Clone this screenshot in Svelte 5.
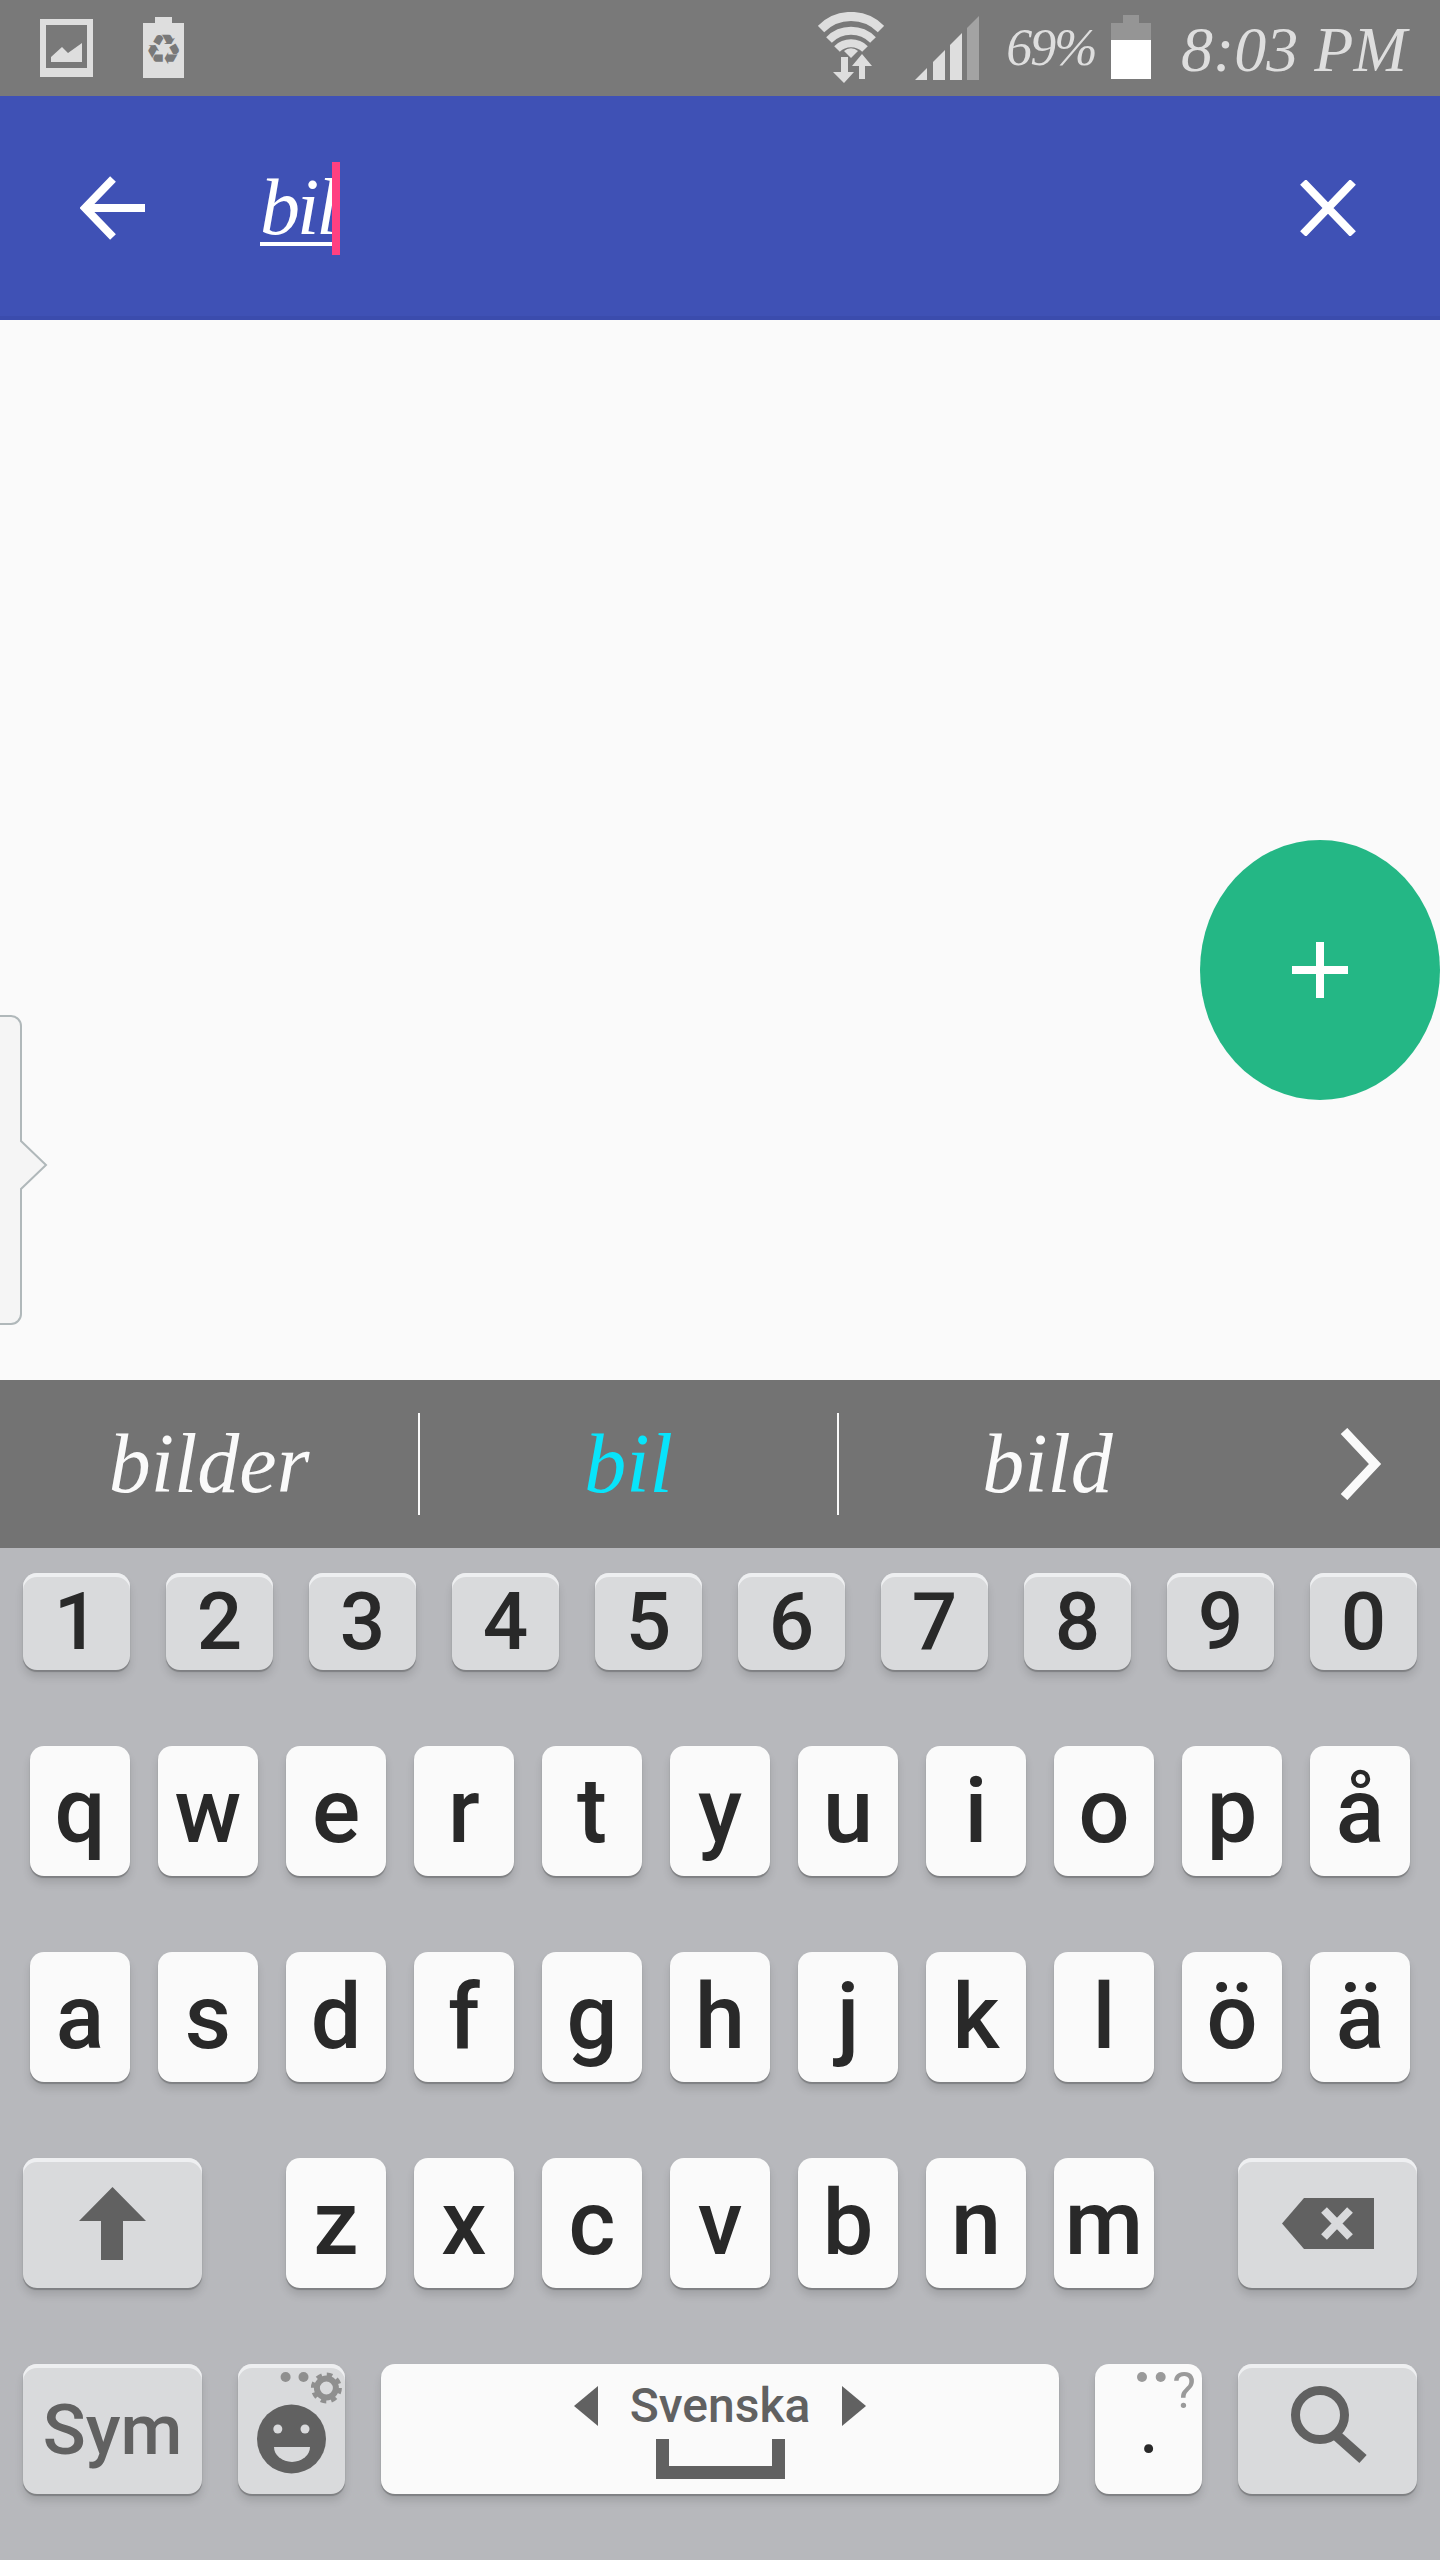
<script>
  const digits = ["1", "2", "3", "4", "5", "6", "7", "8", "9", "0"];
  const row1 = ["q", "w", "e", "r", "t", "y", "u", "i", "o", "p", "å"];
  const row2 = ["a", "s", "d", "f", "g", "h", "j", "k", "l", "ö", "ä"];
  const row3 = ["z", "x", "c", "v", "b", "n", "m"];
</script>

<div class="phone">
  <div class="statusbar">
    <svg class="pic" viewBox="0 0 53 58" width="53" height="58">
      <path d="M0 0 H53 V58 H0 Z M6 6 V49 H47 V6 Z" fill="#dedede" fill-rule="evenodd" />
      <path d="M11 38 L22 28 L28 34 L42 24 V43 H11 Z" fill="#dedede" />
    </svg>
    <svg class="recycle" viewBox="0 0 41 61" width="41" height="61">
      <path d="M12 0 H29 V6 H41 V61 H0 V6 H12 Z" fill="#dedede" />
      <text x="20.5" y="47" text-anchor="middle" class="recycle-glyph">♻</text>
    </svg>

    <svg class="wifi" viewBox="0 0 66 72" width="66" height="72">
      <g fill="none" stroke="#dedede" stroke-width="8">
        <path d="M3 17 A42 42 0 0 1 63 17" stroke-width="9" />
        <path d="M11 28 A31 31 0 0 1 55 28" />
        <path d="M19 37 A20 20 0 0 1 47 37" />
      </g>
      <path d="M26 39 A10 10 0 0 1 40 39 L33 46 Z" fill="#dedede" />
      <path d="M23 45 H30 V60 H36 L26 71 L15 60 H23 Z" fill="#dedede" />
      <path d="M44 42 L54 54 H47 V67 H41 V54 H34 Z" fill="#dedede" />
    </svg>
    <svg class="signal" viewBox="0 0 64 64" width="64" height="64">
      <path d="M0 64 L12 52 V64 Z" fill="#dedede" />
      <path d="M18 46 L30 34 V64 H18 Z" fill="#dedede" />
      <path d="M35 29 L47 17 V64 H35 Z" fill="#dedede" />
      <path d="M52 12 L64 0 V64 H52 Z" fill="#a3a3a3" />
    </svg>
    <span class="pct">69%</span>
    <svg class="battery" viewBox="0 0 40 64" width="40" height="64">
      <path d="M12 0 H28 V8 H40 V25 H0 V8 H12 Z" fill="#959595" />
      <rect y="25" width="40" height="39" fill="#fff" />
    </svg>
    <span class="time">8:03 PM</span>
  </div>

  <header class="appbar">
    <svg class="back" viewBox="0 0 65 64" width="65" height="64">
      <path d="M33 3 L5 32 L33 61 M6 32 H65" fill="none" stroke="#fff" stroke-width="8" />
    </svg>
    <div class="query">
      <span class="word">bil</span>
      <span class="cursor"></span>
    </div>
    <svg class="clear" viewBox="0 0 56 56" width="56" height="56">
      <path d="M3 2 L53 54 M53 2 L3 54" fill="none" stroke="#fff" stroke-width="8" />
    </svg>
  </header>

  <main class="content">
    <svg class="handle" viewBox="0 0 48 310" width="48" height="310">
      <path d="M-4 1 H11 A10 10 0 0 1 21 11 V126 L46 150 L21 174 V299 A10 10 0 0 1 11 309 H-4 Z" fill="#f5f5f5" stroke="#b0b8ba" stroke-width="2" />
    </svg>
    <div class="fab">
      <svg viewBox="0 0 56 56" width="56" height="56">
        <path d="M24 0 H32 V24 H56 V32 H32 V56 H24 V32 H0 V24 H24 Z" fill="#fff" />
      </svg>
    </div>
  </main>

  <div class="candidates">
    <div class="cand">bilder</div>
    <div class="cand sep picked">bil</div>
    <div class="cand sep">bild</div>
    <svg class="more" viewBox="0 0 42 72" width="42" height="72">
      <path d="M4 3 L35 36 L4 69" fill="none" stroke="#fafafa" stroke-width="9" />
    </svg>
  </div>

  <div class="keyboard">
    <div class="row numbers">
      {#each digits as d}
        <div class="key fn num">{d}</div>
      {/each}
    </div>
    <div class="row letters">
      {#each row1 as k}
        <div class="key letter">{k}</div>
      {/each}
    </div>
    <div class="row letters">
      {#each row2 as k}
        <div class="key letter">{k}</div>
      {/each}
    </div>
    <div class="row bottom">
      <div class="key fn wide">
        <svg viewBox="0 0 67 73" width="67" height="73">
          <path d="M33.5 0 L67 34 H44 V73 H22 V34 H0 Z" fill="#616161" />
        </svg>
      </div>
      <div class="mid">
        {#each row3 as k}
          <div class="key letter">{k}</div>
        {/each}
      </div>
      <div class="key fn wide">
        <svg viewBox="0 0 92 51" width="92" height="51">
          <path d="M22 0 H92 V51 H22 L0 25.5 Z" fill="#616161" />
          <path d="M42 12 L68 39 M68 12 L42 39" stroke="#d9dadc" stroke-width="8" fill="none" />
        </svg>
      </div>
    </div>
    <div class="row bottom gapped">
      <div class="key fn wide sym">Sym</div>
      <div class="key fn small">
        <svg viewBox="0 0 107 130" width="107" height="130">
          <circle cx="47.6" cy="13" r="5" fill="#8f8f8f" />
          <circle cx="65.5" cy="13" r="5" fill="#8f8f8f" />
          <circle cx="88.4" cy="24" r="9.5" fill="none" stroke="#8f8f8f" stroke-width="6" />
          <circle cx="88.4" cy="24" r="13.5" fill="none" stroke="#8f8f8f" stroke-width="4" stroke-dasharray="5.6 5" />
          <circle cx="53.5" cy="75" r="34.5" fill="#616161" />
          <circle cx="39.8" cy="65" r="4.5" fill="#d9dadc" />
          <circle cx="67" cy="65" r="4.5" fill="#d9dadc" />
          <path d="M36 83 H72 A18 15 0 0 1 36 83 Z" fill="#d9dadc" />
        </svg>
      </div>
      <div class="key space">
        <div class="lang">
          <svg viewBox="0 0 24 40" width="24" height="40"><path d="M24 0 V40 L0 20 Z" fill="#616161" /></svg>
          <span>Svenska</span>
          <svg viewBox="0 0 24 40" width="24" height="40"><path d="M0 0 V40 L24 20 Z" fill="#616161" /></svg>
        </div>
        <div class="bar"></div>
      </div>
      <div class="key small">
        <svg viewBox="0 0 107 130" width="107" height="130">
          <circle cx="47" cy="13" r="5" fill="#9a9a9a" />
          <circle cx="65.7" cy="13" r="5" fill="#9a9a9a" />
          <text x="89" y="44" text-anchor="middle" class="hint">?</text>
          <text x="54" y="89" text-anchor="middle" class="dot">.</text>
        </svg>
      </div>
      <div class="key fn wide">
        <svg viewBox="0 0 178 130" width="178" height="130">
          <circle cx="81" cy="51" r="24.5" fill="none" stroke="#616161" stroke-width="9" />
          <path d="M97 71 L124 95" fill="none" stroke="#616161" stroke-width="11" />
        </svg>
      </div>
    </div>
  </div>
</div>

<style>
  :global(body) {
    margin: 0;
    background: #fafafa;
  }

  .phone {
    width: 1440px;
    height: 2560px;
    display: flex;
    flex-direction: column;
    overflow: hidden;
    font-family: Roboto, "Liberation Sans", sans-serif;
  }

  svg {
    display: block;
    flex: none;
  }

  .statusbar {
    height: 96px;
    flex: none;
    display: flex;
    align-items: flex-start;
    background: #797979;
    padding: 0 36px 0 40px;
    box-sizing: border-box;
    color: #dedede;
  }

  .pic { margin-top: 19px; }
  .recycle { margin: 17px auto 0 50px; }
  .recycle-glyph {
    font-family: "DejaVu Sans", sans-serif;
    font-size: 42px;
    fill: #797979;
  }
  .wifi { margin-top: 12px; }
  .signal { margin: 16px 0 0 31px; }
  .battery { margin: 15px 0 0 14px; }

  .pct, .time {
    font-family: "Liberation Serif", serif;
    font-style: italic;
    white-space: nowrap;
    text-align: center;
  }
  .pct {
    width: 92px;
    margin-left: 26px;
    font-size: 52px;
    line-height: 96px;
    letter-spacing: -2px;
  }
  .time {
    width: 223px;
    margin-left: 30px;
    font-size: 64px;
    line-height: 100px;
  }

  .appbar {
    height: 224px;
    flex: none;
    box-sizing: border-box;
    display: flex;
    align-items: center;
    background: #3f51b5;
    border-bottom: 4px solid #3b4cad;
    padding: 4px 84px 0 80px;
  }

  .query {
    display: flex;
    align-items: flex-start;
    margin-left: 115px;
    height: 93px;
    flex: 1;
  }
  .word {
    width: 72px;
    height: 84px;
    box-sizing: border-box;
    border-bottom: 4px solid #fff;
    color: #fff;
    font-family: "Liberation Serif", serif;
    font-style: italic;
    font-size: 80px;
    line-height: 90px;
    letter-spacing: -3px;
    text-align: center;
  }
  .cursor {
    width: 8px;
    height: 93px;
    background: #ff4081;
  }

  .content {
    height: 1060px;
    flex: none;
    position: relative;
    background: #fafafa;
  }
  .handle {
    position: absolute;
    left: 0;
    top: 695px;
    overflow: visible;
  }
  .fab {
    position: absolute;
    left: 1200px;
    top: 520px;
    width: 240px;
    height: 260px;
    border-radius: 50%;
    background: #24b785;
    display: flex;
    align-items: center;
    justify-content: center;
  }

  .candidates {
    height: 168px;
    flex: none;
    display: flex;
    align-items: center;
    background: #737373;
    color: #fafafa;
  }
  .cand {
    width: 418px;
    height: 102px;
    font-family: "Liberation Serif", serif;
    font-style: italic;
    font-size: 84px;
    line-height: 102px;
    text-align: center;
    box-sizing: border-box;
  }
  .cand.sep {
    width: 419px;
    border-left: 2px solid #fafafa;
  }
  .picked {
    color: #08e4fb;
  }
  .more {
    margin-left: 84px;
  }

  .keyboard {
    flex: 1;
    background: #b7b8bc;
    padding-top: 25px;
    display: flex;
    flex-direction: column;
  }

  .row {
    display: flex;
    justify-content: space-between;
    flex: none;
  }
  .numbers {
    padding: 0 23px;
    margin-bottom: 76px;
  }
  .letters {
    padding: 0 30px;
    margin-bottom: 76px;
  }
  .bottom {
    padding: 0 23px;
    margin-bottom: 76px;
  }
  .gapped {
    gap: 36px;
  }
  .mid {
    display: flex;
    gap: 28px;
  }

  .key {
    height: 130px;
    border-radius: 14px;
    background: #fafafa;
    box-shadow: 0 2px 1px #7f8083, 0 7px 8px rgba(0, 0, 0, 0.12);
    display: flex;
    align-items: center;
    justify-content: center;
    color: #292929;
    flex: none;
    box-sizing: border-box;
  }
  .fn {
    background: #d9dadc;
    box-shadow: inset 0 4px 0 #eeeff1, 0 2px 1px #7f8083, 0 7px 8px rgba(0, 0, 0, 0.12);
  }
  .letter {
    width: 100px;
    font-size: 90px;
    font-weight: 550;
  }
  .num {
    width: 107px;
    height: 97px;
    font-size: 80px;
    font-weight: 550;
  }
  .wide { width: 179px; }
  .small { width: 107px; }
  .sym {
    color: #616161;
    font-size: 71px;
    font-weight: 500;
  }

  .space {
    flex: 1;
    flex-direction: column;
    justify-content: flex-start;
    color: #616161;
    padding-top: 14px;
  }
  .lang {
    display: flex;
    align-items: center;
    gap: 32px;
    font-size: 48px;
    line-height: 56px;
    font-weight: 500;
  }
  .bar {
    width: 129px;
    height: 40px;
    box-sizing: border-box;
    margin-top: 5px;
    border: 13px solid #616161;
    border-top: 0;
  }

  .hint {
    font-size: 50px;
    fill: #9a9a9a;
  }
  .dot {
    font-size: 80px;
    fill: #292929;
  }
</style>
